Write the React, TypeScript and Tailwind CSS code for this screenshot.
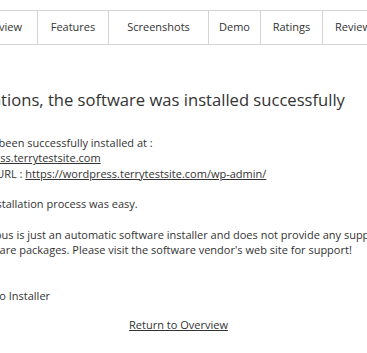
const tabs = [
  { label: "Overview", w: "w-[38px]", cls: "justify-end pr-[15px]" },
  { label: "Features", w: "w-[71px]", cls: "justify-center" },
  { label: "Screenshots", w: "w-[100px]", cls: "justify-center" },
  { label: "Demo", w: "w-[52px]", cls: "justify-center" },
  { label: "Ratings", w: "w-[62px]", cls: "justify-center" },
];

export default function App() {
  return (
    <div className="w-[367px] h-[353px] overflow-hidden bg-white text-[#333] font-['Open_Sans',sans-serif]">
      <div className="mt-[10px] flex h-[35px] border-y border-[#d4d4d4] text-[11px]">
        {tabs.map((t) => (
          <div
            key={t.label}
            className={`flex shrink-0 items-center whitespace-nowrap border-r border-[#d4d4d4] ${t.w} ${t.cls}`}
          >
            {t.label}
          </div>
        ))}
        <div className="flex items-center whitespace-nowrap pl-[12px]">Reviews</div>
      </div>

      <div className="ml-[-81px] whitespace-nowrap">
        <h1 className="mt-[44px] ml-[-3px] text-[16.6px] leading-[22px]">
          Congratulations, the software was installed successfully
        </h1>
        <p className="mt-[24px] text-[11px] leading-[15.3px]">
          WordPress has been successfully installed at :
          <br />
          <a href="#" className="underline">https://wordpress.terrytestsite.com</a>
          <br />
          Administrative URL :{" "}
          <a href="#" className="underline">https://wordpress.terrytestsite.com/wp-admin/</a>
          <br />
          <br />
          We hope the installation process was easy.
          <br />
          <br />
          NOTE: Softaculous is just an automatic software installer and does not provide any support for the
          <br />
          individual software packages. Please visit the software vendor's web site for support!
          <br />
          <br />
          Regards,
          <br />
          Softaculous Auto Installer
        </p>
      </div>

      <div className="mt-[14px] flex justify-center pr-[10px] text-[11px] leading-[15.3px]">
        <a href="#" className="underline">Return to Overview</a>
      </div>
    </div>
  );
}
